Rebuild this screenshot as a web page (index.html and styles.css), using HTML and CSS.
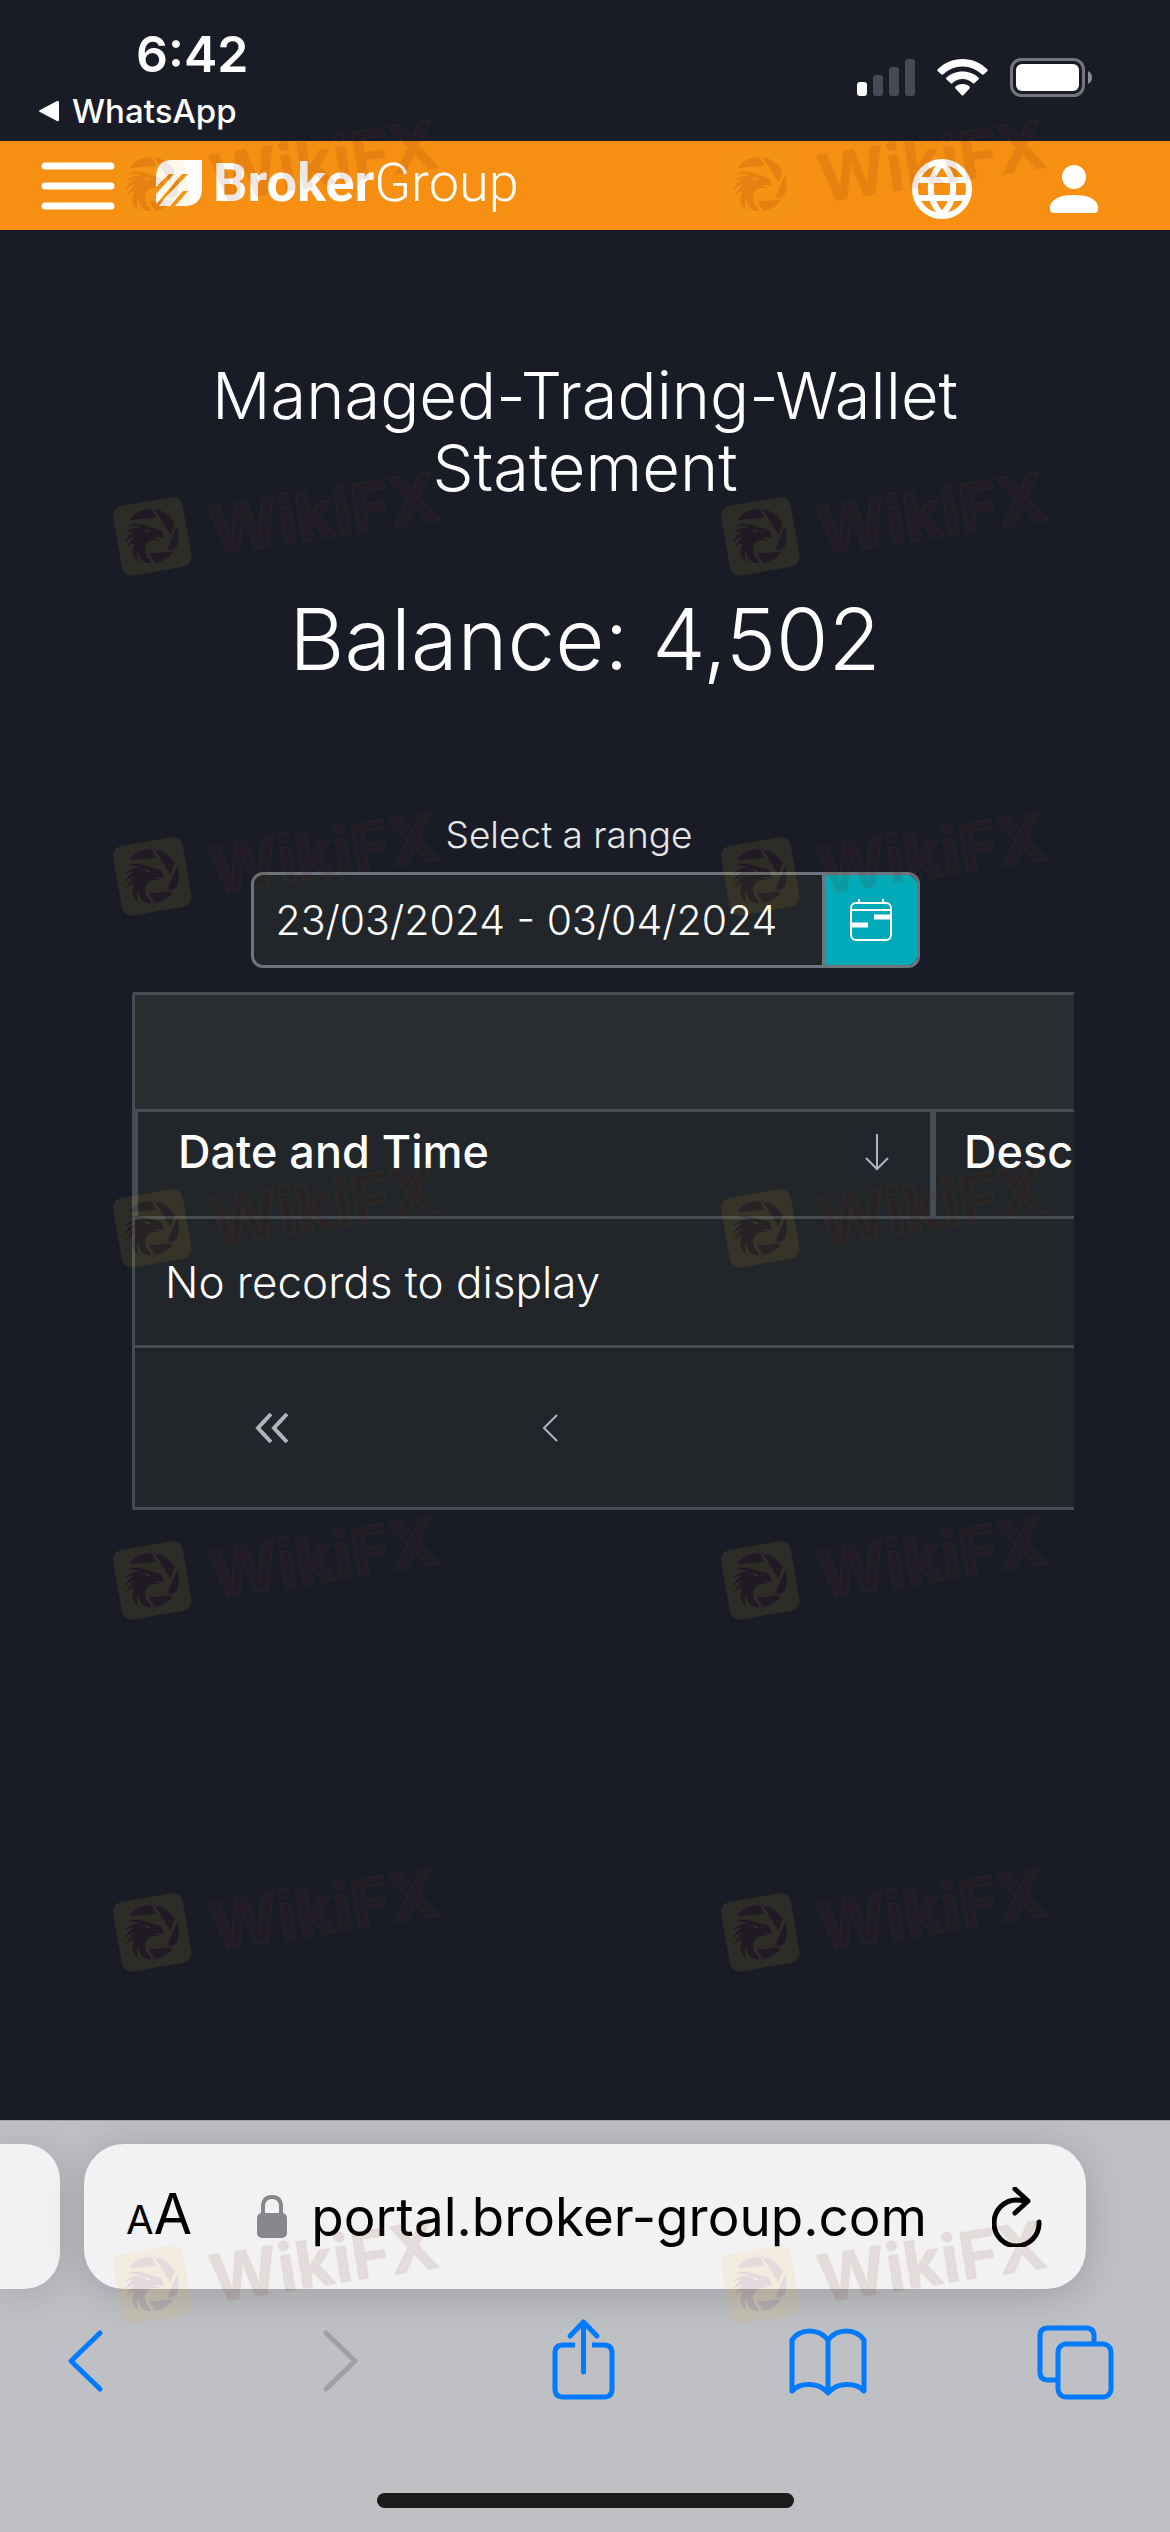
FILE: index.html
```html
<!DOCTYPE html>
<html lang="en">
<head>
    <meta charset="utf-8">
    <meta name="viewport" content="width=device-width,initial-scale=1.0">
    <title>Managed-Trading-Wallet Statement</title>
    <link rel="stylesheet" href="styles.css">
</head>
<body>
    <div class="status-bar">
        <div class="status-left">
            <div class="time">6:42</div>
            <a href="#" class="back-app">
                <svg width="22" height="24" viewBox="0 0 22 24"><path d="M19 2 L2 11 Q0 12 2 13 L19 22 Q21 23 21 20 V4 Q21 1 19 2Z" fill="#fff"/></svg>
                WhatsApp
            </a>
        </div>
        <div class="status-right">
            <svg width="58" height="40" viewBox="0 0 58 40">
                <rect x="0" y="24" width="10" height="14" rx="3" fill="#fff"/>
                <g fill="#464854">
                    <rect x="16" y="17" width="10" height="21" rx="3"/>
                    <rect x="32" y="9" width="10" height="29" rx="3"/>
                    <rect x="48" y="1" width="10" height="37" rx="3"/>
                </g>
            </svg>
            <svg width="51" height="40" viewBox="0 0 51 40" fill="#fff">
                <path d="M25.500 1 C35 1 44 5 50.500 11.500 Q51 12.500 50 13.500 L46.500 16.500 Q45.500 17 44.500 16 C39.500 11.500 33 8.500 25.500 8.500 S11.500 11.500 6.500 16 Q5.500 17 4.500 16.500 L1 13.500 Q0 12.500 .5 11.500 C7 5 16 1 25.500 1Z"/>
                <path d="M25.500 13.500 C32 13.500 37.500 16 41.500 19.500 Q42.500 20.500 41.500 21.500 L37.500 25 Q36.500 26 35.500 25 C32.500 22.500 29.500 21 25.500 21 S18.500 22.500 15.500 25 Q14.500 26 13.500 25 L9.500 21.500 Q8.500 20.500 9.500 19.500 C13.500 16 19 13.500 25.500 13.500Z"/>
                <path d="M25.500 26 C28.500 26 31 27 32.500 28.500 Q33.500 29.500 32.500 30.500 L26.500 37 Q25.500 38 24.500 37 L18.500 30.500 Q17.500 29.500 18.500 28.500 C20 27 22.500 26 25.500 26Z"/>
            </svg>
            <svg width="82" height="40" viewBox="0 0 82 40">
                <rect x="1.500" y="1.500" width="72" height="36" rx="10" fill="none" stroke="#74767e" stroke-width="3"/>
                <rect x="6" y="6" width="63" height="27" rx="6" fill="#fff"/>
                <path d="M78 13 Q82 15 82 19.500 T78 26Z" fill="#8c8d94"/>
            </svg>
        </div>
    </div>

    <header class="navbar">
        <button class="icon-btn" aria-label="Menu">
            <svg width="74" height="48" viewBox="0 0 74 48" stroke="#fff" stroke-width="7" stroke-linecap="round"><path d="M4 4H70M4 24H70M4 44H70"/></svg>
        </button>
        <a href="#" class="logo">
            <svg width="46" height="46" viewBox="0 0 46 46">
                <path d="M16 0H46V28Q46 46 28 46H0V18Q0 0 16 0Z" fill="#fff"/>
                <path d="M0 27L13 14H18L0 34ZM3 41L26 14H32L8 39L3 46H0V44ZM14 46L27 31H32L19 46Z" fill="#f78f12"/>
            </svg>
            <span class="logo-text"><b>Broker</b>Group</span>
        </a>
        <div class="nav-actions">
            <button class="icon-btn" aria-label="Language">
                <svg width="60" height="60" viewBox="0 0 60 60" fill="none" stroke="#fff" stroke-width="6">
                    <circle cx="30" cy="30" r="27"/><path d="M6 21H54M6 39H54M30 4C15 20 15 40 30 56C45 40 45 20 30 4Z"/>
                </svg>
            </button>
            <button class="icon-btn" aria-label="Account">
                <svg width="48" height="48" viewBox="0 0 48 48" fill="#fff"><circle cx="24" cy="12" r="12"/><path d="M0 44V41C2 33 12 30 24 30S46 33 48 41V44Q48 48 44 48H4Q0 48 0 44Z"/></svg>
            </button>
        </div>
    </header>

    <main class="page">
        <h1>Managed-Trading-Wallet Statement</h1>
        <h2>Balance: 4,502</h2>
        <label class="range-label" for="range">Select a range</label>
        <div class="range">
            <input type="text" id="range" value="23/03/2024 - 03/04/2024">
            <button aria-label="Open calendar">
                <svg width="42" height="42" viewBox="0 0 42 42" fill="none" stroke="#fff" stroke-width="2">
                    <rect x="1" y="4" width="40" height="37" rx="5"/><path d="M9 0V4M33 0V4M1 11H41"/>
                    <path d="M24 18H40M2 26H18" stroke-width="5"/>
                </svg>
            </button>
        </div>

        <div class="grid">
            <div class="grid-toolbar"></div>
            <table>
                <thead>
                    <tr>
                        <th class="col-date"><span class="th-inner">Date and Time
                            <svg width="26" height="38" viewBox="0 0 26 38" fill="none" stroke="#adb5bd" stroke-width="2"><path d="M13 1V36M2 25L13 36L24 25"/></svg></span>
                        </th>
                        <th>Description</th>
                    </tr>
                </thead>
                <tbody>
                    <tr><td colspan="2">No records to display</td></tr>
                </tbody>
            </table>
            <div class="pager">
                <button aria-label="First page"><svg width="34" height="30" viewBox="0 0 34 30" fill="none" stroke="#adb5bd" stroke-width="4"><path d="M16 1L3 15L16 29M32 1L19 15L32 29"/></svg></button>
                <button aria-label="Previous page"><svg width="16" height="28" viewBox="0 0 16 28" fill="none" stroke="#adb5bd" stroke-width="2"><path d="M15 1L2 14L15 27"/></svg></button>
            </div>
        </div>
    </main>

    <footer class="browser">
        <div class="tabs">
            <div class="prev-tab"></div>
            <div class="address">
                <button class="text-size" aria-label="Text size"><small>A</small>A</button>
                <div class="url">
                    <svg width="30" height="43" viewBox="0 0 30 43"><path d="M6 20V12Q6 2 15 2T24 12V20" fill="none" stroke="#86868b" stroke-width="4"/><rect y="18" width="30" height="25" rx="5" fill="#86868b"/></svg>
                    portal.broker-group.com
                </div>
                <button class="icon-btn" aria-label="Reload">
                    <svg width="50" height="60" viewBox="0 0 50 60" fill="none" stroke="#000" stroke-width="5" stroke-linecap="round" stroke-linejoin="round"><path d="M47 35A22.500 23 0 1 1 25 13L36 14M23 2L36 14L23 26"/></svg>
                </button>
            </div>
        </div>
        <nav class="tools">
            <button class="icon-btn" aria-label="Back"><svg width="80" height="82" viewBox="0 0 80 82" fill="none" stroke="#007aff" stroke-width="5" stroke-linecap="round" stroke-linejoin="round"><path d="M55 15L26 43L55 71"/></svg></button>
            <button class="icon-btn" aria-label="Forward"><svg width="80" height="82" viewBox="0 0 80 82" fill="none" stroke="#9fa0a2" stroke-width="5" stroke-linecap="round" stroke-linejoin="round"><path d="M34 15L63 43L34 71"/></svg></button>
            <button class="icon-btn" aria-label="Share"><svg width="80" height="82" viewBox="0 0 80 82" fill="none" stroke="#007aff" stroke-width="5" stroke-linejoin="round"><path d="M35 27H23Q15 27 15 35V71Q15 79 23 79H64Q72 79 72 71V35Q72 27 64 27H52"/><path d="M43.500 54V4M30 18L43.500 4L57 18" stroke-linecap="round"/></svg></button>
            <button class="icon-btn" aria-label="Bookmarks"><svg width="80" height="82" viewBox="0 0 80 82" fill="none" stroke="#007aff" stroke-width="5" stroke-linejoin="round"><path d="M41 22C32 10 13 10 5 22V73C13 64 32 64 41 75C50 64 69 64 77 73V22C69 10 50 10 41 22V75"/></svg></button>
            <button class="icon-btn" aria-label="Tabs"><svg width="80" height="82" viewBox="0 0 80 82" fill="none" stroke="#007aff" stroke-width="5"><path d="M60 25V18Q60 10 52 10H14Q6 10 6 18V54Q6 62 14 62H23"/><rect x="24" y="26" width="53" height="53" rx="8"/></svg></button>
        </nav>
        <div class="home-bar"></div>
    </footer>

    <svg class="defs" aria-hidden="true">
        <symbol id="mark" viewBox="0 0 400 150">
            <g transform="translate(15 42) scale(.333)">
                <rect x="36" y="39" width="212" height="212" rx="30" transform="rotate(-10 142 145)" fill="#f0be28" fill-opacity=".1" mask="url(#cut)"/>
                <use href="#eagle" fill="#540a0a" fill-opacity=".1"/>
            </g>
            <text class="mark-text" x="124" y="109" transform="rotate(-9 124 109)">WikiFX</text>
        </symbol>
        <path id="eagle" d="M72 97Q96 62 140 63L154 89ZM149 64Q186 70 209 104L197 140ZM216 115Q229 150 213 181L186 188ZM132 197L205 191Q186 220 151 225ZM175 145C174 128 162 120 142 120C125 108 90 104 70 112Q98 113 110 120Q78 116 61 138Q78 128 90 130Q66 142 60 163Q76 148 88 146Q70 165 66 181Q78 168 88 164Q80 186 84 204Q94 220 98 218Q93 196 100 188Q103 214 118 222Q134 227 140 225C128 208 118 196 120 180C122 162 140 154 150 156L165 158Q154 150 146 150Q160 144 178 151ZM114 124L138 126Q132 134 124 133Z" fill-rule="evenodd"/>
        <mask id="cut" maskUnits="userSpaceOnUse" x="0" y="0" width="300" height="300"><rect width="300" height="300" fill="#fff"/><use href="#eagle" fill="#000" transform="rotate(10 142 145)"/></mask>
    </svg>
    <div class="watermarks" aria-hidden="true">
        <svg><use href="#mark"/></svg><svg><use href="#mark"/></svg>
        <svg><use href="#mark"/></svg><svg><use href="#mark"/></svg>
        <svg><use href="#mark"/></svg><svg><use href="#mark"/></svg>
        <svg><use href="#mark"/></svg><svg><use href="#mark"/></svg>
        <svg><use href="#mark"/></svg><svg><use href="#mark"/></svg>
        <svg><use href="#mark"/></svg><svg><use href="#mark"/></svg>
        <svg><use href="#mark"/></svg><svg><use href="#mark"/></svg>
    </div>
</body>
</html>
```
FILE: styles.css
```css
* { box-sizing: border-box; }
body { margin: 0; min-height: 100vh; display: flex; flex-direction: column; position: relative; background: #191c27; color: #fff; font-family: Inter, "Liberation Sans", sans-serif; }
button { border: 0; padding: 0; background: none; font-family: inherit; color: inherit; }
a { color: inherit; text-decoration: none; }
svg { display: block; flex: none; }
.icon-btn { display: block; }

/* phone status bar */
.status-bar { display: flex; justify-content: space-between; padding: 24px 78px 10px 38px; }
.time { margin-left: 98px; font-size: 50px; line-height: 60px; font-weight: 600; }
.back-app { display: flex; align-items: center; gap: 12px; margin-top: 7px; font-size: 33px; line-height: 40px; font-weight: 500; }
.status-right { display: flex; gap: 22px; padding-top: 34px; }

.navbar { display: flex; align-items: center; padding: 0 72px 0 41px; height: 89px; background: #f78f12; }
.logo { display: flex; align-items: center; gap: 11px; margin-left: 41px; padding-bottom: 6px; }
.logo-text { font-family: Roboto, "Liberation Sans", sans-serif; font-size: 54px; line-height: 60px; font-weight: 300; }
.logo-text b { font-weight: 700; }
.nav-actions { display: flex; align-items: center; gap: 78px; margin-left: auto; padding-top: 7px; }

.page { flex: 1; padding: 130px 96px 60px; }
h1, h2 { margin: 0; font-weight: 300; text-align: center; }
h1 { font-size: 65px; line-height: 72px; padding: 0 60px; }
h2 { margin-top: 86px; font-size: 85px; line-height: 100px; }
.range-label { display: block; margin: 123px 32px 15px 0; text-align: center; font-size: 37px; line-height: 44px; font-weight: 300; color: #e6e7e9; }
.range { display: flex; width: 669px; max-width: 100%; height: 96px; margin: 0 auto; border: 3px solid #6c757d; border-radius: 12px; background: #222529; overflow: hidden; }
.range input { flex: 1; min-width: 0; border: 0; padding: 0 22px; background: none; color: #fff; font: 300 41px Inter, sans-serif; }
.range button { display: flex; align-items: center; justify-content: center; width: 95px; border-left: 3px solid #6c757d; background: #00aab8; }

/* statement grid, wider than the screen and cut at its edge */
.grid { margin: 24px 0 0 36px; border: 3px solid #444c54; border-right: 0; border-radius: 3px 0 0 3px; background: #222529; overflow: hidden; }
.grid-toolbar { height: 117px; background: #292e31; border-bottom: 3px solid #444c54; }
.grid table { width: 1600px; table-layout: fixed; border-spacing: 0; }
.grid th, .grid td { border-bottom: 3px solid #444c54; text-align: left; }
.grid th { height: 107px; padding: 0 28px; border-left: 6px solid #444c54; font-size: 45px; line-height: 80px; font-weight: 500; vertical-align: top; }
.grid .col-date { width: 795px; padding: 0 40px 0 40px; border-left-width: 3px; }
.th-inner { display: flex; justify-content: space-between; align-items: center; }
.grid td { height: 129px; padding: 0 30px; font-size: 44px; font-weight: 300; }
.pager { display: flex; gap: 78px; padding: 0 37px; height: 159px; }
.pager button { display: flex; align-items: center; justify-content: center; width: 200px; }

/* browser chrome */
.browser { background: #bfc0c4; border-top: 1px solid #a2a3aa; padding: 23px 0 24px; color: #000; overflow: hidden; }
.tabs { display: flex; gap: 24px; padding-right: 84px; }
.prev-tab { width: 60px; height: 145px; border-radius: 0 36px 36px 0; background: #f2f2f4; box-shadow: 0 5px 40px rgba(0,0,0,.14); }
.address { flex: 1; height: 145px; display: flex; align-items: center; justify-content: space-between; padding: 0 44px 0 42px; border-radius: 40px; background: #f2f2f4; box-shadow: 0 5px 40px rgba(0,0,0,.18); }
.text-size { font-size: 56px; line-height: 66px; }
.text-size small { font-size: 40px; }
.url { display: flex; align-items: center; gap: 24px; font-size: 53px; line-height: 60px; }
.tools { display: flex; justify-content: space-between; padding: 29px 56px 0 45px; }
.home-bar { width: 417px; height: 15px; margin: 93px auto 0; border-radius: 8px; background: #1c1c1c; }

.defs { position: absolute; width: 0; height: 0; }
.watermarks { position: absolute; inset: 0; display: grid; grid-template-columns: 608px 1fr; grid-template-rows: 352px 340px repeat(5, 352px); padding: 94px 0 0 90px; overflow: hidden; pointer-events: none; }
.watermarks svg { width: 400px; height: 150px; }
.mark-text { font-family: Inter, sans-serif; font-size: 66px; font-weight: 700; fill: #601008; fill-opacity: .1; stroke: #c8a028; stroke-opacity: .05; stroke-width: 2px; stroke-linejoin: round; }
```
